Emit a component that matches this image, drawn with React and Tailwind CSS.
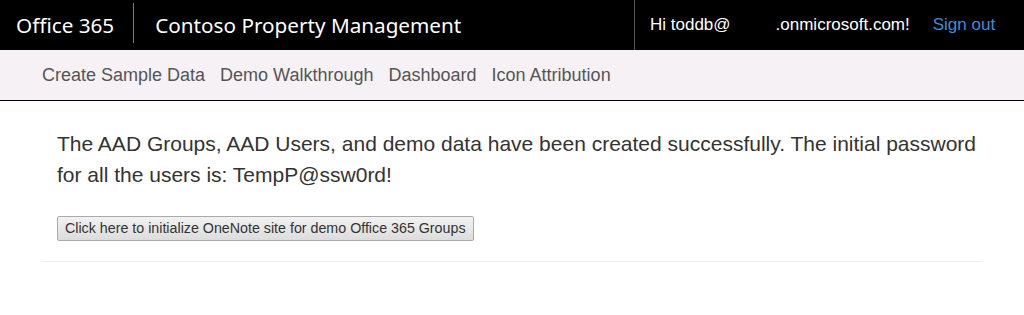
export default function App() {
  const links = ["Create Sample Data", "Demo Walkthrough", "Dashboard", "Icon Attribution"];

  return (
    <div className="w-[1024px] h-[315px] bg-white font-['Liberation_Sans',Arial,sans-serif] text-[#333]">
      {/* top bar */}
      <header className="h-[50px] bg-black text-white flex items-stretch">
        <div className="flex items-center">
          <span className="pl-[16px] pr-[19px] text-[20.7px] font-['Noto_Sans',sans-serif] leading-none">Office 365</span>
          <span className="w-px h-[40px] bg-[#7a7a7a] self-start mt-[3px]"></span>
          <span className="pl-[21px] text-[20.7px] font-['Noto_Sans',sans-serif] leading-none">Contoso Property Management</span>
        </div>
        <div className="ml-auto flex items-center border-l border-[#555] w-[390px]">
          <span className="pl-[15px] text-[17px]">Hi toddb@</span>
          <span className="pl-[45px] text-[17px]">.onmicrosoft.com!</span>
          <a className="pl-[23px] text-[17px] text-[#3f8ed8]">Sign out</a>
        </div>
      </header>

      {/* nav */}
      <nav className="h-[51px] bg-[#f6f1f5] border-b border-black flex items-center pl-[42px] gap-[15px] text-[18px] text-[#555]">
        {links.map((l) => (
          <a key={l}>{l}</a>
        ))}
      </nav>

      {/* content */}
      <main className="px-[42px]">
        <div className="pl-[15px] pt-[27px]">
          <p className="w-[935px] text-[21px] leading-[31px] text-[#333]">
            The AAD Groups, AAD Users, and demo data have been created successfully. The initial password for all the users is: TempP@ssw0rd!
          </p>
          <button className="mt-[26px] h-[25px] px-[7px] text-[14.25px] text-[#333] border border-[#aaa] rounded-[2px] bg-gradient-to-b from-[#f2f2f2] to-[#dcdcdc]">
            Click here to initialize OneNote site for demo Office 365 Groups
          </button>
        </div>
        <hr className="mt-[20px] border-t border-[#eee] w-[940px]" />
      </main>
    </div>
  );
}
